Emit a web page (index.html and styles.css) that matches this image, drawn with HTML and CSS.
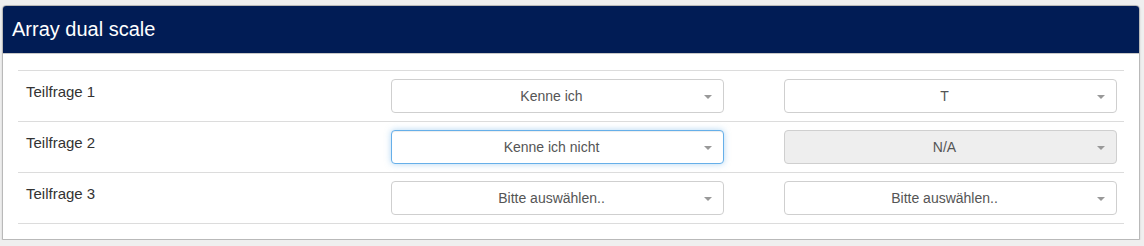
FILE: index.html
```html
<!DOCTYPE html>
<html lang="de">
<head>
<meta charset="utf-8">
<title>Array dual scale</title>
<link rel="stylesheet" href="styles.css">
</head>
<body>
<div class="panel">
  <div class="panel-heading">Array dual scale</div>
  <div class="panel-body">
    <div class="table">
      <div class="row">
        <div class="label">Teilfrage 1</div>
        <div class="select"><span class="value">Kenne ich</span><span class="caret"></span></div>
        <div class="select"><span class="value">T</span><span class="caret"></span></div>
      </div>
      <div class="row">
        <div class="label">Teilfrage 2</div>
        <div class="select focus"><span class="value">Kenne ich nicht</span><span class="caret"></span></div>
        <div class="select disabled"><span class="value">N/A</span><span class="caret"></span></div>
      </div>
      <div class="row">
        <div class="label">Teilfrage 3</div>
        <div class="select"><span class="value">Bitte auswählen..</span><span class="caret"></span></div>
        <div class="select"><span class="value">Bitte auswählen..</span><span class="caret"></span></div>
      </div>
    </div>
  </div>
</div>
</body>
</html>
```

FILE: styles.css
```css
html, body {
  margin: 0;
  background: #efefef;
}
body {
  padding: 5px 4px 0 2px;
  font-family: "Liberation Sans", Arial, sans-serif;
}
.panel {
  background: #fff;
  border: 1px solid #b9b9b9;
  border-radius: 4px 4px 0 0;
  box-shadow: 0 1px 2px rgba(0,0,0,0.15);
}
.panel-heading {
  background: #011c55;
  color: #fff;
  font-size: 20px;
  height: 47px;
  display: flex;
  align-items: center;
  padding: 0 9px;
  border-radius: 3px 3px 0 0;
  border-bottom: 1px solid #c8c8c8;
}
.panel-body {
  padding: 16px 15px 15px 15px;
}
.table {
  border-top: 1px solid #dcdcdc;
}
.row {
  display: grid;
  grid-template-columns: 365px 393px 333px;
  padding: 0 8px;
  border-bottom: 1px solid #dcdcdc;
  height: 50px;
}
.label {
  font-size: 15px;
  line-height: 20px;
  color: #333;
  padding-top: 11px;
}
.select {
  position: relative;
  margin-top: 8px;
  width: 333px;
  height: 34px;
  box-sizing: border-box;
  border: 1px solid #cfcfcf;
  border-radius: 4px;
  background: #fff;
  display: flex;
  align-items: center;
  justify-content: center;
  padding: 0 24px 0 12px;
  font-size: 14px;
  color: #555;
}
.select.focus {
  border-color: #66afe9;
  box-shadow: inset 0 1px 1px rgba(0,0,0,.075), 0 0 6px rgba(102,175,233,.5);
}
.select.disabled {
  background: #eee;
  border-color: #cfcfcf;
}
.caret {
  position: absolute;
  right: 11px;
  top: 15px;
  width: 0;
  height: 0;
  border-top: 4px solid #999;
  border-left: 4px solid transparent;
  border-right: 4px solid transparent;
}
```
